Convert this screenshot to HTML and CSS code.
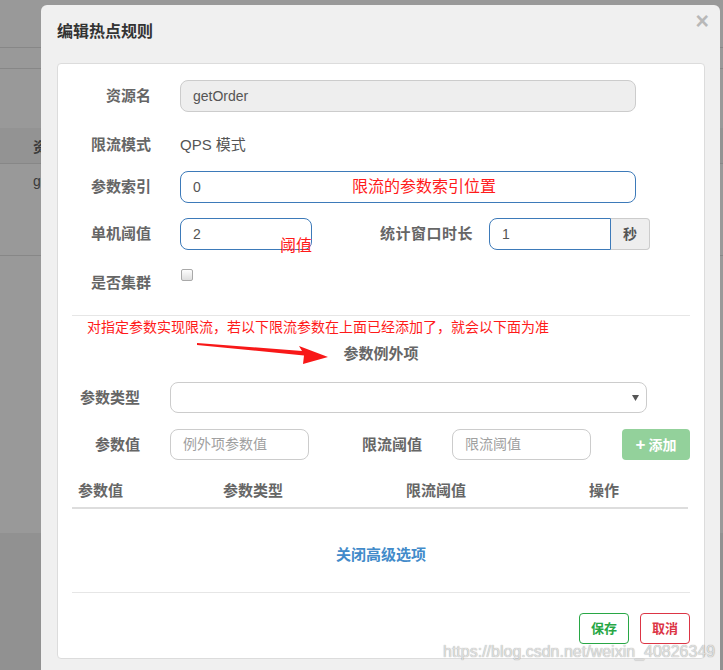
FILE: index.html
```html
<!DOCTYPE html>
<html lang="zh-CN">
<head>
<meta charset="utf-8">
<title>编辑热点规则</title>
<link rel="stylesheet" href="styles.css">
</head>
<body>
<div class="bg">
  <div class="bg-top"></div>
  <div class="bg-bar"></div>
  <div class="bg-gap"></div>
  <div class="bg-thead"><span>资源名</span></div>
  <div class="bg-row"><span>getOrder</span></div>
  <div class="bg-rest"></div>
</div>

<div class="modal">
  <div class="modal-header">
    <h4 class="modal-title">编辑热点规则</h4>
    <span class="close">×</span>
  </div>
  <div class="panel">
    <div class="frow">
      <span class="lbl">资源名</span>
      <div class="ctl ctl-readonly w-full">getOrder</div>
    </div>
    <div class="frow frow-2">
      <span class="lbl">限流模式</span>
      <span class="static">QPS 模式</span>
    </div>
    <div class="frow frow-3">
      <span class="lbl">参数索引</span>
      <div class="ctl ctl-blue w-full">0</div>
    </div>
    <div class="frow frow-4">
      <span class="lbl">单机阈值</span>
      <div class="ctl ctl-blue w-small">2</div>
      <span class="lbl lbl-window">统计窗口时长</span>
      <div class="group">
        <div class="ctl ctl-blue ctl-grouped">1</div>
        <span class="addon">秒</span>
      </div>
    </div>
    <div class="frow frow-5">
      <span class="lbl lbl-top">是否集群</span>
      <span class="checkbox"></span>
    </div>
    <div class="hr hr-1"></div>
    <div class="notice">对指定参数实现限流，若以下限流参数在上面已经添加了，就会以下面为准</div>
    <div class="subtitle">参数例外项</div>
    <div class="frow2 frow2-select">
      <span class="lbl2">参数类型</span>
      <div class="ctl ctl-select">
        <svg class="caret" width="7" height="6" viewBox="0 0 7 6"><path d="M0 0H7L3.5 6Z" fill="#555"/></svg>
      </div>
    </div>
    <div class="frow2 frow2-values">
      <span class="lbl2">参数值</span>
      <div class="ctl ctl-ph w-139">例外项参数值</div>
      <span class="lbl2 lbl-limit">限流阈值</span>
      <div class="ctl ctl-ph w-139">限流阈值</div>
      <span class="btn-add"><span class="plus">+</span>添加</span>
    </div>
    <div class="thead">
      <span>参数值</span>
      <span>参数类型</span>
      <span>限流阈值</span>
      <span>操作</span>
    </div>
    <div class="toggle-link">关闭高级选项</div>
    <div class="hr hr-2"></div>
    <div class="actions">
      <span class="btn btn-save">保存</span>
      <span class="btn btn-cancel">取消</span>
    </div>
  </div>
</div>

<div class="anno anno-index">限流的参数索引位置</div>
<div class="anno anno-threshold">阈值</div>
<svg class="arrow" width="145" height="32" viewBox="0 0 145 32">
  <polygon points="7,7 112,15 109,10 138,21 113,28 114,19.5 7,9" fill="#f81818"/>
</svg>
<div class="watermark">https://blog.csdn.net/weixin_40826349</div>
</body>
</html>
```

FILE: styles.css
```css
* {
  box-sizing: border-box;
}

body {
  margin: 0;
  width: 723px;
  height: 670px;
  overflow: hidden;
  position: relative;
  background: #999999;
  font-family: "Liberation Sans", "Noto Sans CJK SC", sans-serif;
}

/* ---------- dimmed page behind the dialog ---------- */
.bg {
  display: flex;
  flex-direction: column;
  height: 670px;
}
.bg-top {
  height: 48px;
  border-bottom: 1px solid #878787;
}
.bg-bar {
  height: 21px;
  border-bottom: 1px solid #878787;
}
.bg-gap {
  height: 59px;
}
.bg-thead {
  height: 36px;
  background: #939393;
  border-bottom: 1px solid #878787;
  padding: 8px 0 0 33px;
  font-size: 14px;
  font-weight: bold;
  color: #3a3a3a;
}
.bg-row {
  height: 92px;
  border-bottom: 1px solid #878787;
  padding: 9px 0 0 33px;
  font-size: 14px;
  color: #3a3a3a;
}
.bg-rest {
  flex: 1;
  background: linear-gradient(#999 0, #999 277px, #919191 277px);
}

/* ---------- dialog ---------- */
.modal {
  position: absolute;
  left: 41px;
  top: 5px;
  width: 679px;
  height: 680px;
  background: #f0f0f0;
  border-radius: 6px;
  padding: 0 15px 0 16px;
}
.modal-header {
  height: 58px;
  padding-top: 17px;
  display: flex;
  justify-content: space-between;
  align-items: flex-start;
}
.modal-title {
  margin: 0;
  font-size: 16px;
  line-height: 20px;
  font-weight: bold;
  color: #333;
}
.close {
  font-size: 23px;
  line-height: 16px;
  font-weight: bold;
  color: #b8b8b8;
  margin-top: -9px;
  margin-right: -4px;
}

.panel {
  background: #fff;
  border: 1px solid #dcdcdc;
  border-radius: 4px;
  padding: 16px 14px 14px 14px;
}

/* first section rows */
.frow {
  display: flex;
  align-items: center;
  height: 32px;
}
.frow-2 { margin-top: 17px; }
.frow-3 { margin-top: 10px; }
.frow-4 { margin-top: 15px; }
.frow-5 {
  margin-top: 15px;
  height: 28px;
  align-items: flex-start;
}

.lbl {
  width: 79px;
  margin-right: 29px;
  text-align: right;
  font-size: 15px;
  line-height: 20px;
  font-weight: bold;
  color: #666;
  white-space: nowrap;
}
.lbl-top {
  padding-top: 8px;
}
.lbl-window {
  width: 93px;
  text-align: left;
  letter-spacing: 0.5px;
  margin-left: 68px;
  margin-right: 16px;
}

.static {
  font-size: 15px;
  line-height: 20px;
  color: #555;
}

.ctl {
  height: 32px;
  border: 1px solid #cccccc;
  border-radius: 8px;
  background: #fff;
  padding: 0 12px;
  font-size: 14px;
  line-height: 30px;
  color: #555;
  white-space: nowrap;
}
.ctl-readonly {
  background: #eeeeee;
}
.ctl-blue {
  border-color: #3d7ab9;
}
.w-full { width: 456px; }
.w-small { width: 132px; }

.group {
  display: flex;
}
.ctl-grouped {
  width: 122px;
  border-radius: 8px 0 0 8px;
}
.addon {
  width: 39px;
  height: 32px;
  border: 1px solid #cccccc;
  border-left: 0;
  border-radius: 0 4px 4px 0;
  background: #eeeeee;
  text-align: center;
  font-size: 14px;
  line-height: 30px;
  font-weight: bold;
  color: #555;
}

.checkbox {
  width: 12px;
  height: 12px;
  margin-top: 4px;
  margin-left: 1px;
  border: 1px solid #a9a9a9;
  border-radius: 2px;
  background: linear-gradient(#fdfdfd, #dedede);
}

.hr {
  border-top: 1px solid #e6e6e6;
}
.hr-1 { margin-top: 22px; }
.hr-2 { margin-top: 27px; }

.notice {
  margin-top: 1px;
  padding-left: 15px;
  font-size: 14px;
  line-height: 20px;
  color: #ff1a1a;
  white-space: nowrap;
}
.subtitle {
  margin-top: 7px;
  text-align: center;
  font-size: 15px;
  line-height: 20px;
  font-weight: bold;
  color: #666;
}

/* second section rows */
.frow2 {
  display: flex;
  align-items: center;
  height: 31px;
}
.frow2-select { margin-top: 18px; }
.frow2-values { margin-top: 16px; }
.frow2 .ctl {
  height: 31px;
  line-height: 29px;
}
.lbl2 {
  width: 68px;
  margin-right: 30px;
  text-align: right;
  font-size: 15px;
  line-height: 20px;
  font-weight: bold;
  color: #666;
  white-space: nowrap;
}
.lbl-limit {
  width: 62px;
  margin-left: 51px;
}
.ctl-select {
  width: 477px;
  display: flex;
  align-items: center;
  justify-content: flex-end;
  padding-right: 7px;
}
.caret {
  display: block;
}
.ctl-ph {
  color: #a0a0a0;
}
.w-139 { width: 139px; }

.btn-add {
  margin-left: 31px;
  width: 68px;
  height: 31px;
  border-radius: 4px;
  background: #93d19b;
  color: #fff;
  font-size: 14px;
  line-height: 31px;
  font-weight: bold;
  text-align: center;
}
.plus {
  font-size: 17px;
  margin-right: 3px;
}

.thead {
  margin-top: 13px;
  width: 616px;
  display: grid;
  grid-template-columns: 145px 183px 183px 105px;
  padding: 8px 0 6px;
  border-bottom: 2px solid #dddddd;
  font-size: 15px;
  line-height: 20px;
  font-weight: bold;
  color: #666;
}
.thead span {
  padding-left: 6px;
}

.toggle-link {
  margin-top: 36px;
  text-align: center;
  font-size: 15px;
  line-height: 20px;
  font-weight: bold;
  color: #428bca;
}

.actions {
  margin-top: 20px;
  display: flex;
  justify-content: flex-end;
  gap: 11px;
  padding-right: 0;
}
.btn {
  width: 50px;
  height: 31px;
  border: 1px solid;
  border-radius: 4px;
  text-align: center;
  font-size: 13px;
  line-height: 29px;
  font-weight: bold;
  background: #fff;
}
.btn-save {
  border-color: #28a745;
  color: #28a745;
}
.btn-cancel {
  border-color: #dc3545;
  color: #dc3545;
}

/* ---------- annotations drawn over the screenshot ---------- */
.anno {
  position: absolute;
  font-size: 16px;
  line-height: 20px;
  color: #ff1a1a;
  white-space: nowrap;
}
.anno-index {
  left: 352px;
  top: 177px;
}
.anno-threshold {
  left: 280px;
  top: 236px;
}
.arrow {
  position: absolute;
  left: 190px;
  top: 336px;
}
.watermark {
  position: absolute;
  left: 443px;
  top: 642px;
  font-size: 16px;
  line-height: 20px;
  color: rgba(235, 235, 235, 0.85);
  text-shadow: 0 0 1px rgba(0, 0, 0, 0.45);
  white-space: nowrap;
}
```
